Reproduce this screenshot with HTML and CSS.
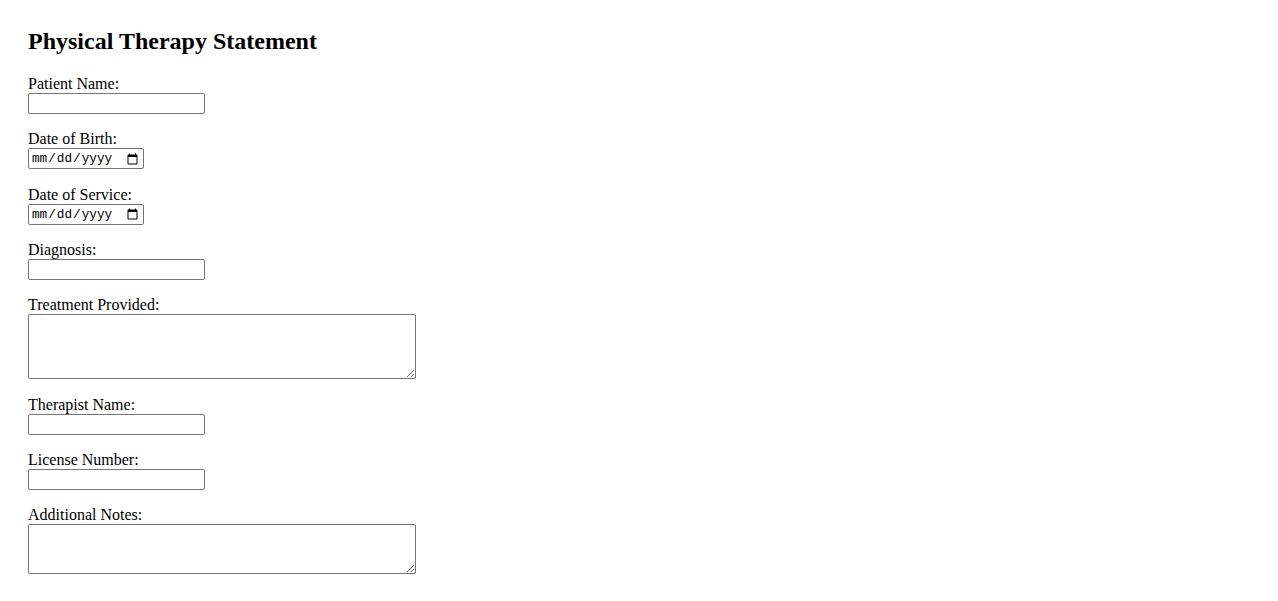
FILE: index.html
```
<!DOCTYPE html>
<html>
<head>
<meta charset="utf-8">
<title>Physical Therapy Statement</title>
<link rel="stylesheet" href="styles.css">
</head>
<body>
<form class="statement">
  <h2>Physical Therapy Statement</h2>

  <div class="field">
    <label for="patient">Patient Name:</label>
    <input type="text" id="patient" class="text-input">
  </div>

  <div class="field">
    <label for="dob">Date of Birth:</label>
    <input type="date" id="dob" class="date-input">
  </div>

  <div class="field">
    <label for="dos">Date of Service:</label>
    <input type="date" id="dos" class="date-input">
  </div>

  <div class="field">
    <label for="diagnosis">Diagnosis:</label>
    <input type="text" id="diagnosis" class="text-input">
  </div>

  <div class="field">
    <label for="treatment">Treatment Provided:</label>
    <textarea id="treatment" class="area tall"></textarea>
  </div>

  <div class="field">
    <label for="therapist">Therapist Name:</label>
    <input type="text" id="therapist" class="text-input">
  </div>

  <div class="field">
    <label for="license">License Number:</label>
    <input type="text" id="license" class="text-input">
  </div>

  <div class="field">
    <label for="notes">Additional Notes:</label>
    <textarea id="notes" class="area short"></textarea>
  </div>
</form>
</body>
</html>
```

FILE: styles.css
```
body {
	margin: 0;
	padding: 28px;
	font-family: "Liberation Serif", "Times New Roman", serif;
	font-size: 16px;
	color: #000;
	background: #fff;
}

h2 {
	margin: 0 0 20px;
	font-size: 24px;
	font-weight: bold;
}

.field {
	margin-bottom: 16.35px;
}

.field label {
	display: block;
}

.text-input,
.date-input,
.area {
	display: block;
	box-sizing: border-box;
	margin: 0;
	border: 1px solid #767676;
	border-radius: 2px;
	background: #fff;
}

.text-input {
	width: 177px;
	height: 21px;
	padding: 1px 2px;
	font: 13.33px "Liberation Sans", Arial, sans-serif;
}

.date-input {
	width: 116px;
	height: 21px;
	padding: 1px 2px;
	font: 12.7px "Liberation Mono", "Courier New", monospace;
	color: #000;
}

.area {
	width: 388px;
	margin-bottom: 1px;
	padding: 2px;
	font: 13.33px "Liberation Mono", monospace;
	resize: both;
}

.area.tall { height: 65px; }
.area.short { height: 50px; }
```
